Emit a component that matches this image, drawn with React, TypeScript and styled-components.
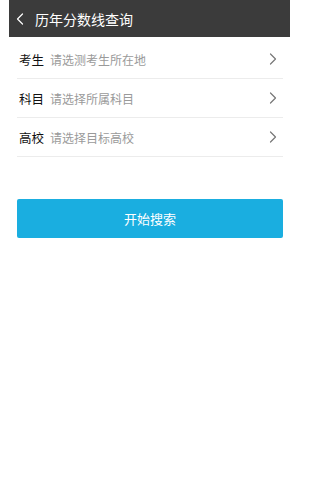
import React, { FC } from 'react'
import styled, { createGlobalStyle } from 'styled-components'

const GlobalStyle = createGlobalStyle`
  html, body {
    margin: 0;
    padding: 0;
    background: #ffffff;
    font-family: "Noto Sans CJK SC", "Noto Sans", sans-serif;
  }
`

const Page = styled.div`
  width: 300px;
  min-height: 500px;
  box-sizing: border-box;
  padding: 0 10px 0 9px;
  background: #ffffff;
`

const Header = styled.header`
  height: 37px;
  background: #3b3b3b;
  display: flex;
  align-items: center;
  padding-left: 7px;
  color: #ffffff;
`

const Title = styled.h1`
  margin: 0 0 0 5px;
  font-size: 14px;
  font-weight: 400;
  line-height: 1;
`

const Form = styled.div`
  margin: 3px 7px 0 8px;
`

const Row = styled.div`
  height: 38px;
  display: flex;
  align-items: center;
  border-bottom: 1px solid #ececec;
  padding-left: 2px;
`

const Label = styled.span`
  font-size: 12.5px;
  font-weight: 400;
  color: #111111;
  width: 31px;
  flex-shrink: 0;
`

const Placeholder = styled.span`
  flex: 1;
  font-size: 12px;
  color: #9a9a9a;
`

const Arrow = styled.svg`
  width: 8px;
  height: 12px;
  margin-right: 6px;
`

const SearchButton = styled.button`
  display: block;
  width: 100%;
  height: 39px;
  margin-top: 42px;
  border: none;
  border-radius: 2px;
  background: #1aaee0;
  color: #ffffff;
  font-family: inherit;
  font-size: 13px;
`

const Chevron: FC<{ color: string; left?: boolean }> = ({ color, left }) => (
  <Arrow viewBox="0 0 8 12" fill="none">
    <path
      d={left ? 'M6.5 1L1.5 6l5 5' : 'M1.5 1l5 5-5 5'}
      stroke={color}
      strokeWidth="1.2"
      strokeLinecap="round"
      strokeLinejoin="round"
    />
  </Arrow>
)

const rows = [
  { label: '考生', hint: '请选测考生所在地' },
  { label: '科目', hint: '请选择所属科目' },
  { label: '高校', hint: '请选择目标高校' },
]

const App: FC = () => {
  return (
    <Page>
      <GlobalStyle />
      <Header>
        <Chevron color="#ffffff" left />
        <Title>历年分数线查询</Title>
      </Header>
      <Form>
        {rows.map((r) => (
          <Row key={r.label}>
            <Label>{r.label}</Label>
            <Placeholder>{r.hint}</Placeholder>
            <Chevron color="#777777" />
          </Row>
        ))}
        <SearchButton>开始搜索</SearchButton>
      </Form>
    </Page>
  )
}

export default App
